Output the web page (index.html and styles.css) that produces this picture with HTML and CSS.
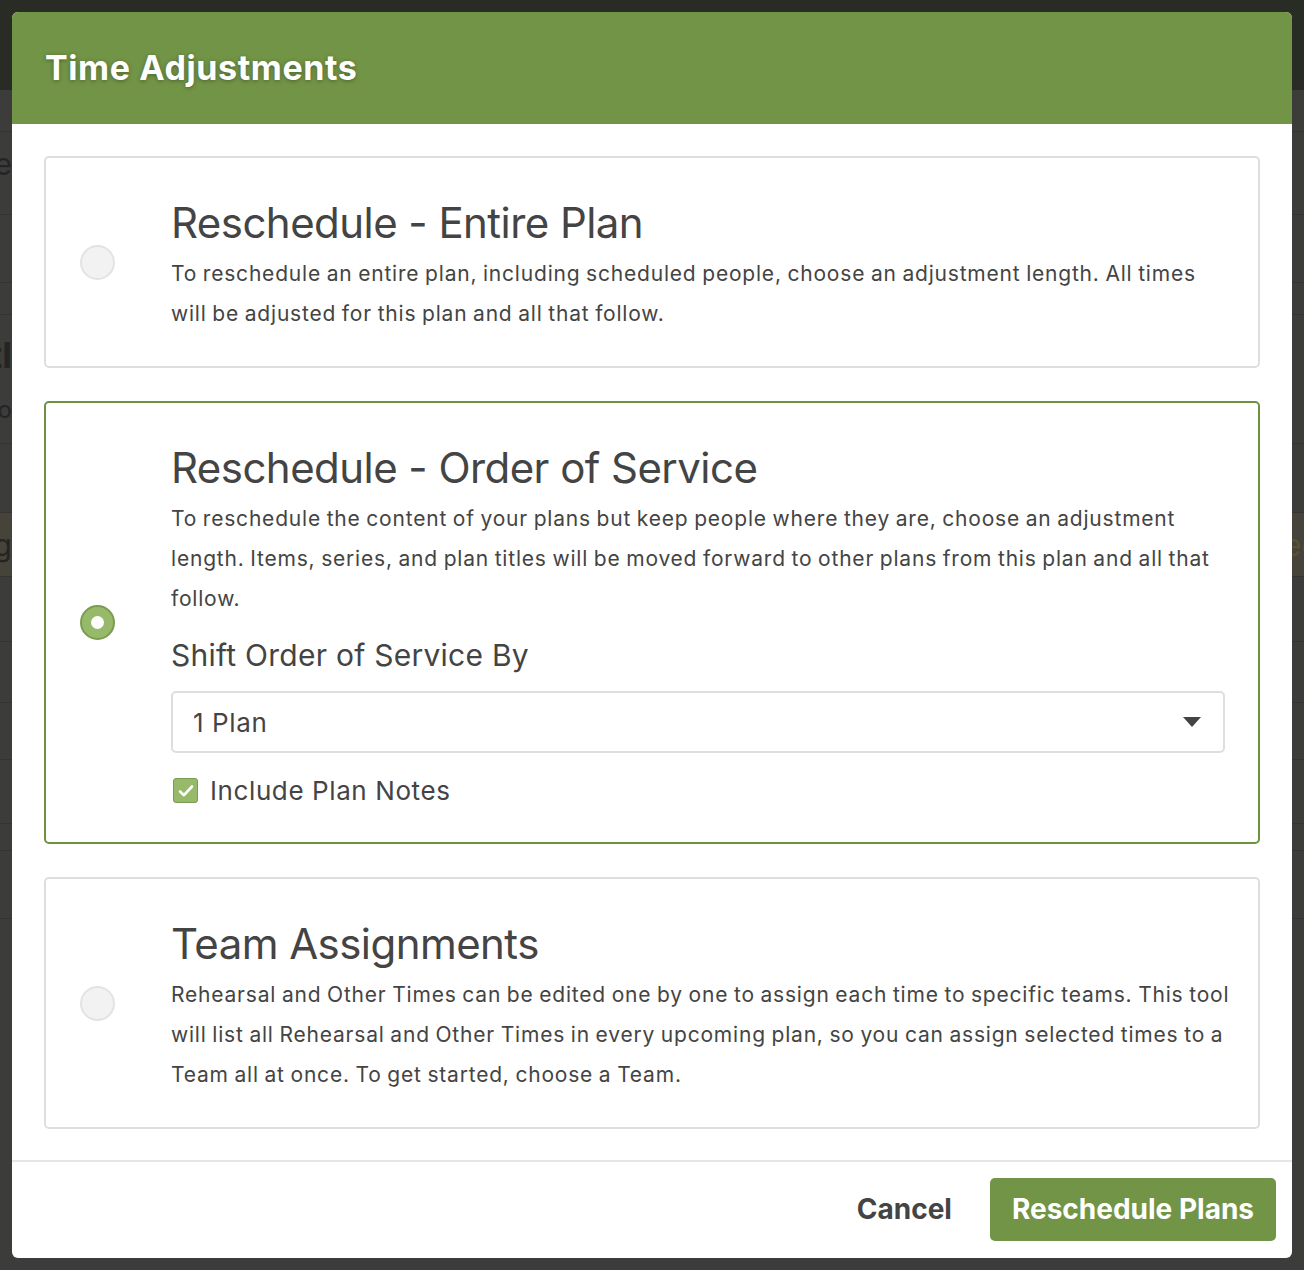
FILE: index.html
```html
<!DOCTYPE html>
<html>
<head>
<meta charset="utf-8">
<link rel="stylesheet" href="styles.css">
<title>Time Adjustments</title>
</head>
<body>
<div class="backdrop">
  <div class="backdrop-top"></div>
  <div class="bd-row bd-h42"></div>
  <div class="bd-row bd-h83"><span class="bd-text">Time</span></div>
  <div class="bd-row bd-h68"></div>
  <div class="bd-row bd-h32"></div>
  <div class="bd-row bd-h129"><span class="bd-text bd-big">Titl</span><span class="bd-text bd-small">Info</span></div>
  <div class="bd-row bd-h69"></div>
  <div class="bd-row bd-h64 bd-band"><span class="bd-text">Song</span><span class="bd-text bd-right">ed</span></div>
  <div class="bd-row bd-h65"></div>
  <div class="bd-row bd-h61"></div>
  <div class="bd-row bd-h57"></div>
  <div class="bd-row bd-h64"></div>
  <div class="bd-row bd-h27"></div>
  <div class="bd-row bd-h68"></div>
</div>
<div class="page">
  <div class="modal">
    <div class="modal-header">
      <h1 class="modal-title">Time Adjustments</h1>
    </div>
    <div class="modal-body">
      <div class="option">
        <div class="radio-col"><span class="radio"></span></div>
        <div class="option-content">
          <h2 class="option-title">Reschedule - Entire Plan</h2>
          <p class="option-text">To reschedule an entire plan, including scheduled people, choose an adjustment length. All times will be adjusted for this plan and all that follow.</p>
        </div>
      </div>
      <div class="option option-selected">
        <div class="radio-col"><span class="radio radio-checked"></span></div>
        <div class="option-content">
          <h2 class="option-title">Reschedule - Order of Service</h2>
          <p class="option-text">To reschedule the content of your plans but keep people where they are, choose an adjustment length. Items, series, and plan titles will be moved forward to other plans from this plan and all that follow.</p>
          <div class="field-label">Shift Order of Service By</div>
          <div class="select">
            <span class="select-value">1 Plan</span>
            <span class="select-caret"></span>
          </div>
          <label class="checkbox-row">
            <span class="checkbox">
              <svg width="20" height="20" viewBox="0 0 20 20"><path d="M4 10.5 L8 14.2 L16 5.5" fill="none" stroke="#fff" stroke-width="2.6" stroke-linecap="round" stroke-linejoin="round"/></svg>
            </span>
            <span class="checkbox-label">Include Plan Notes</span>
          </label>
        </div>
      </div>
      <div class="option">
        <div class="radio-col"><span class="radio"></span></div>
        <div class="option-content">
          <h2 class="option-title">Team Assignments</h2>
          <p class="option-text">Rehearsal and Other Times can be edited one by one to assign each time to specific teams. This tool will list all Rehearsal and Other Times in every upcoming plan, so you can assign selected times to a Team all at once. To get started, choose a Team.</p>
        </div>
      </div>
    </div>
    <div class="modal-footer">
      <button class="btn btn-link">Cancel</button>
      <button class="btn btn-primary">Reschedule Plans</button>
    </div>
  </div>
</div>
</body>
</html>
```

FILE: styles.css
```css
html, body {
  margin: 0;
  padding: 0;
}
body {
  background: #3c3c3b;
  font-family: Inter, "Noto Sans", "Liberation Sans", sans-serif;
  color: #444;
  width: 1304px;
  height: 1270px;
  overflow: hidden;
  position: relative;
}
.backdrop {
  position: absolute;
  inset: 0;
  z-index: 0;
  display: flex;
  flex-direction: column;
}
.backdrop-top {
  height: 90px;
  flex: none;
  background: #292c24;
}
.bd-row {
  flex: none;
  border-bottom: 1px solid #343434;
  box-sizing: border-box;
  position: relative;
  overflow: hidden;
}
.bd-h27 { height: 27px; }
.bd-h32 { height: 32px; }
.bd-h42 { height: 42px; }
.bd-h57 { height: 57px; }
.bd-h61 { height: 61px; }
.bd-h64 { height: 64px; }
.bd-h65 { height: 65px; }
.bd-h68 { height: 68px; }
.bd-h69 { height: 69px; }
.bd-h83 { height: 83px; }
.bd-h129 { height: 129px; }
.bd-band {
  background: #45433a;
}
.bd-text {
  position: absolute;
  right: 1292px;
  top: 14px;
  font-size: 30px;
  color: #242424;
  font-family: Inter, sans-serif;
}
.bd-big {
  top: 18px;
  font-size: 36px;
  font-weight: 700;
}
.bd-small {
  top: 80px;
  font-size: 24px;
}
.bd-right {
  right: auto;
  left: 1284px;
  color: #5a5033;
}
.page {
  position: relative;
  z-index: 1;
  padding: 12px;
}
.modal {
  width: 1280px;
  height: 1246px;
  background: #fff;
  border-radius: 6px;
  overflow: hidden;
  display: flex;
  flex-direction: column;
}
.modal-header {
  height: 112px;
  background: #729446;
  display: flex;
  align-items: center;
  padding: 0 33px;
  box-sizing: border-box;
  flex: none;
}
.modal-title {
  margin: 0;
  color: #fff;
  font-size: 34px;
  font-weight: 700;
  letter-spacing: 0.6px;
  text-shadow: 0 1px 4px rgba(0,0,0,0.35);
  position: relative;
  top: -1px;
}
.modal-body {
  padding: 32px 32px 0;
  display: flex;
  flex-direction: column;
  gap: 33px;
  flex: 1;
}
.option {
  border: 2px solid #dedede;
  border-radius: 5px;
  display: flex;
  align-items: center;
}
.option-selected {
  border-color: #6f9241;
}
.radio-col {
  width: 125px;
  padding-left: 34px;
  box-sizing: border-box;
  flex: none;
  display: flex;
  align-items: center;
}
.radio {
  width: 35px;
  height: 35px;
  border-radius: 50%;
  box-sizing: border-box;
  border: 2px solid #e3e3e3;
  background: #f2f2f2;
  display: block;
}
.radio-checked {
  background: #97b96a;
  border-color: #7a9c4e;
  position: relative;
}
.radio-checked::after {
  content: "";
  position: absolute;
  left: 50%;
  top: 50%;
  width: 13px;
  height: 13px;
  margin: -6.5px 0 0 -6.5px;
  border-radius: 50%;
  background: #fff;
}
.option-content {
  flex: 1;
  padding: 40px 26px 32px 0;
}
.option-title {
  margin: 0 0 6px;
  font-size: 42px;
  line-height: 50px;
  font-weight: 400;
  letter-spacing: -0.55px;
  color: #444;
}
.option-text {
  margin: 0;
  font-size: 21px;
  line-height: 40px;
  letter-spacing: 0.8px;
  word-spacing: -1px;
  color: #444;
}
.field-label {
  margin-top: 16px;
  font-size: 30px;
  line-height: 40px;
  letter-spacing: 0.25px;
  color: #444;
}
.select {
  margin-top: 16px;
  margin-right: 7px;
  height: 62px;
  border: 2px solid #dedede;
  border-radius: 5px;
  box-sizing: border-box;
  display: flex;
  align-items: center;
  justify-content: space-between;
  padding: 0 22px 0 20px;
}
.select-value {
  font-size: 26px;
  letter-spacing: 0.6px;
  color: #444;
}
.select-caret {
  width: 0;
  height: 0;
  border-left: 9px solid transparent;
  border-right: 9px solid transparent;
  border-top: 10px solid #444;
}
.checkbox-row {
  margin-top: 22px;
  margin-bottom: 4px;
  display: flex;
  align-items: center;
  gap: 12px;
}
.checkbox {
  width: 25px;
  height: 25px;
  margin-left: 2px;
  background: #97b96a;
  border: 1px solid #7a9c4e;
  border-radius: 3px;
  box-sizing: border-box;
  display: flex;
  align-items: center;
  justify-content: center;
}
.checkbox-label {
  font-size: 26px;
  letter-spacing: 0.6px;
  color: #444;
}
.modal-footer {
  flex: none;
  height: 98px;
  border-top: 2px solid #e6e6e6;
  box-sizing: border-box;
  display: flex;
  align-items: center;
  justify-content: flex-end;
  padding: 0 16px 2px;
  gap: 20px;
}
.btn {
  font-family: inherit;
  font-size: 28px;
  font-weight: 700;
  border: none;
  border-radius: 5px;
  cursor: pointer;
}
.btn-link {
  background: transparent;
  color: #444;
  padding: 0 18px;
  height: 63px;
}
.btn-primary {
  background: #729446;
  color: #fff;
  height: 63px;
  padding: 0 22px;
}
```
